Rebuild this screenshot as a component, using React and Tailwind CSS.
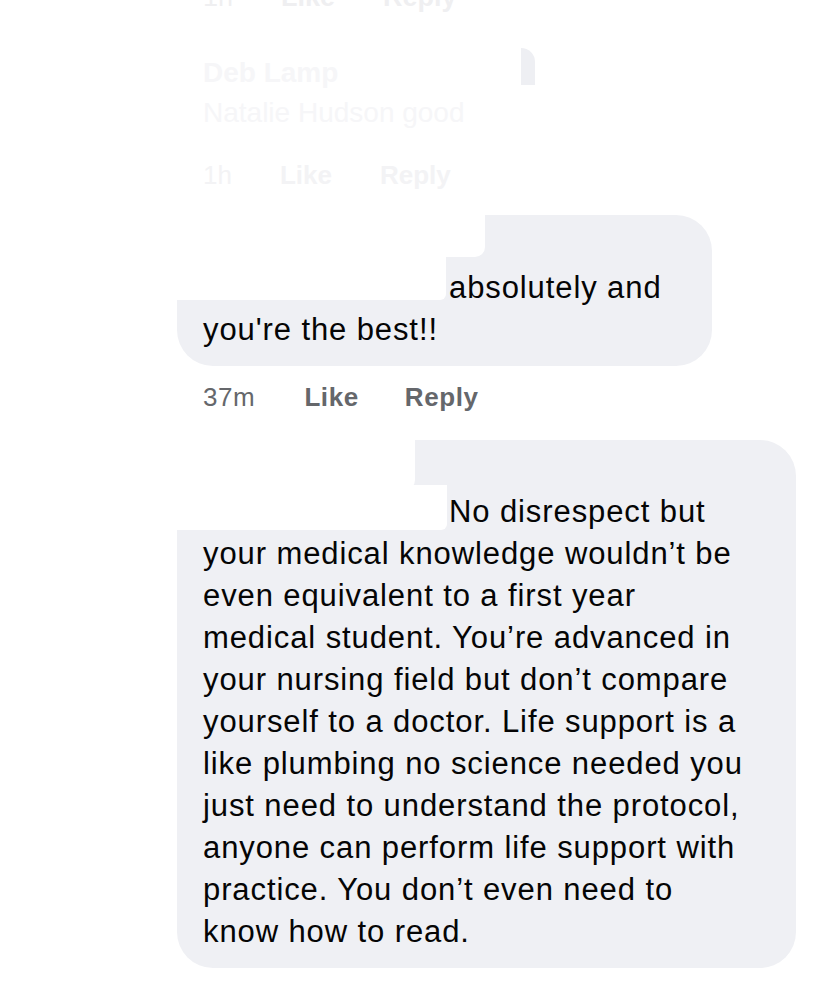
export default function App() {
  const font = { fontFamily: '"Liberation Sans", Arial, sans-serif' };
  const lines2 = [
    "your medical knowledge wouldn\u2019t be",
    "even equivalent to a first year",
    "medical student. You\u2019re advanced in",
    "your nursing field but don\u2019t compare",
    "yourself to a doctor. Life support is a",
    "like plumbing no science needed you",
    "just need to understand the protocol,",
    "anyone can perform life support with",
    "practice. You don\u2019t even need to",
    "know how to read.",
  ];
  return (
    <div
      className="relative w-[828px] h-[983px] overflow-hidden bg-white text-[#050505]"
      style={font}
    >
      {/* faint cut-off meta row at the very top */}
      <div className="mt-[-18px] flex h-[30px] items-center gap-[48px] pl-[203px] text-[27px] font-bold text-[#efeff1]">
        <span className="font-normal">1h</span>
        <span>Like</span>
        <span>Reply</span>
      </div>

      {/* faded (erased) comment */}
      <div className="relative ml-[177px] mt-[33px] h-[95px] w-[358px] bg-white pl-[26px] pt-[8px]">
        <div className="h-[40px] text-[28px] font-bold leading-[40px] text-[#f6f6f8]">Deb Lamp</div>
        <div className="text-[28px] leading-[40px] text-[#f6f6f8]">Natalie Hudson good</div>
        <div className="absolute right-0 top-[3px] h-[37px] w-[14px] rounded-tr-[14px] bg-[#eeeff3]" />
      </div>

      <div className="mt-[18px] flex h-[34px] items-center gap-[48px] pl-[203px] text-[26px] font-bold text-[#f3f3f5]">
        <span className="font-normal">1h</span>
        <span>Like</span>
        <span>Reply</span>
      </div>

      {/* comment 1 */}
      <div className="relative ml-[177px] mt-[23px] w-[535px] rounded-[36px] bg-[#eff0f4] px-[26px] pb-[15px] pt-[12px]">
        <div className="h-[40px]" />
        <div className="text-[31px] leading-[42px] tracking-[0.9px]">
          <div className="whitespace-nowrap">
            <span className="inline-block w-[246px]" />absolutely and
          </div>
          <div className="whitespace-nowrap">you're the best!!</div>
        </div>
      </div>
      {/* redaction over name of comment 1 */}
      <div className="pointer-events-none absolute left-[100px] top-[205px] h-[52px] w-[385px] rounded-br-[10px] bg-white" />
      <div className="pointer-events-none absolute left-[100px] top-[250px] h-[50px] w-[346px] rounded-b-[6px] bg-white" />

      <div className="mt-[13px] flex h-[36px] items-center pl-[203px] text-[26px] text-[#65676b]">
        <span className="tracking-[0.6px]">37m</span>
        <span className="ml-[49px] font-bold tracking-[0.6px]">Like</span>
        <span className="ml-[46px] font-bold tracking-[0.6px]">Reply</span>
      </div>

      {/* comment 2 */}
      <div className="relative ml-[177px] mt-[25px] w-[619px] rounded-[36px] bg-[#eff0f4] px-[26px] pb-[15px] pt-[12px]">
        <div className="h-[39px]" />
        <div className="text-[31px] leading-[42px] tracking-[0.9px]">
          <div className="whitespace-nowrap">
            <span className="inline-block w-[246px]" />No disrespect but
          </div>
          {lines2.map((l, i) => (
            <div key={i} className="whitespace-nowrap">
              {l}
            </div>
          ))}
        </div>
      </div>
      {/* redaction over name of comment 2 */}
      <div className="pointer-events-none absolute left-[100px] top-[430px] h-[60px] w-[315px] rounded-br-[10px] bg-white" />
      <div className="pointer-events-none absolute left-[100px] top-[485px] h-[45px] w-[347px] rounded-b-[6px] bg-white" />
    </div>
  );
}
